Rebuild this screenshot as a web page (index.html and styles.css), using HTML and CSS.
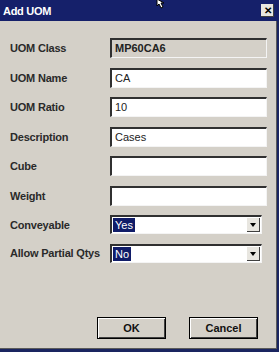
FILE: index.html
```html
<!DOCTYPE html>
<html lang="en">
<head>
    <meta charset="UTF-8">
    <title>Add UOM</title>
    <link rel="stylesheet" href="styles.css">
</head>
<body>

    <div class="window">
        <!-- Title bar -->
        <div class="titlebar">
            <span class="title">Add UOM</span>
            <span class="close">&#x2715;</span>
        </div>

        <!-- Fields -->
        <div class="fields">
            <label>UOM Class</label>
            <div class="box readonly">MP60CA6</div>

            <label>UOM Name</label>
            <div class="box">CA</div>

            <label>UOM Ratio</label>
            <div class="box">10</div>

            <label>Description</label>
            <div class="box">Cases</div>

            <label>Cube</label>
            <div class="box"></div>

            <label>Weight</label>
            <div class="box"></div>

            <label>Conveyable</label>
            <div class="combo"><span class="sel">Yes</span><span class="arrow"></span></div>

            <label>Allow Partial Qtys</label>
            <div class="combo"><span class="sel">No</span><span class="arrow"></span></div>
        </div>

        <!-- Buttons -->
        <div class="buttons">
            <button>OK</button>
            <button>Cancel</button>
        </div>
    </div>

    <svg class="cursor" width="12" height="10" viewBox="0 0 12 10">
        <path d="M1 0 L1 7 L3 5 L5 9 L7 8 L5 4 L8 4 Z" fill="#fff" stroke="#000" stroke-width="1"/>
    </svg>

</body>
</html>
```

FILE: styles.css
```css
body {
    margin: 0;
    background: #1a2560;
    font-family: "Liberation Sans", Arial, sans-serif;
    width: 279px;
    height: 352px;
    overflow: hidden;
    position: relative;
}

.window {
    width: 276px;
    height: 348px;
    background: #d4d0c8;
    border-right: 1px solid #5a5a5a;
    border-bottom: 1px solid #5a5a5a;
    display: flex;
    flex-direction: column;
}

/* Title bar */
.titlebar {
    height: 21px;
    background: #15206a;
    display: flex;
    align-items: center;
    justify-content: space-between;
    padding: 0 5px 0 3px;
    margin-right: -3px;
}

    .titlebar .title {
        color: white;
        font-weight: bold;
        font-size: 11px;
        letter-spacing: -0.3px;
    }

    .titlebar .close {
        width: 13px;
        height: 13px;
        background: #e8e6e0;
        color: #000;
        font-size: 10px;
        font-weight: bold;
        line-height: 13px;
        text-align: center;
        box-shadow: inset -1px -1px 0 #404040;
    }

/* Field grid */
.fields {
    display: grid;
    grid-template-columns: 100px 157px;
    column-gap: 0;
    row-gap: 9.5px;
    padding: 17px 0 0 10px;
    align-items: center;
}

    .fields label {
        font-size: 11px;
        font-weight: bold;
        color: #2a2a2a;
        letter-spacing: -0.2px;
    }

.box {
    height: 20px;
    box-sizing: border-box;
    background: #fff;
    border-top: 2px solid #303030;
    border-left: 2px solid #303030;
    border-right: 1px solid #f4f4f4;
    border-bottom: 1px solid #f4f4f4;
    font-size: 11px;
    color: #222;
    padding: 2px 0 0 3px;
}

    .box.readonly {
        background: #d4d0c8;
        font-weight: bold;
    }

.combo {
    height: 19px;
    width: 152px;
    box-sizing: border-box;
    background: #fff;
    border-top: 2px solid #303030;
    border-left: 2px solid #303030;
    border-right: 1px solid #f4f4f4;
    border-bottom: 1px solid #f4f4f4;
    display: flex;
    align-items: center;
    justify-content: space-between;
    padding: 0 1px 0 1px;
}

    .combo .sel {
        background: #101c68;
        color: #fff;
        font-size: 11px;
        padding: 1px 2px;
        line-height: 12px;
    }

    .combo .arrow {
        width: 13px;
        height: 14px;
        background: #e8e6e0;
        box-shadow: inset -1px -1px 0 #404040;
        position: relative;
    }

        .combo .arrow::after {
            content: "";
            position: absolute;
            left: 3px;
            top: 5px;
            border-left: 3.5px solid transparent;
            border-right: 3.5px solid transparent;
            border-top: 4px solid #000;
        }

/* Buttons */
.buttons {
    margin-top: auto;
    margin-bottom: 9px;
    display: flex;
    justify-content: flex-end;
    gap: 23px;
    padding-right: 18px;
}

    .buttons button {
        width: 69px;
        height: 22px;
        background: #d4d0c8;
        border: 1px solid #000;
        box-shadow: inset 1px 1px 0 #fff, inset -1px -1px 0 #404040;
        font-family: "Liberation Sans", Arial, sans-serif;
        font-size: 11px;
        font-weight: bold;
        color: #111;
        padding: 0;
    }

.cursor {
    position: absolute;
    left: 156px;
    top: -1px;
}
```
